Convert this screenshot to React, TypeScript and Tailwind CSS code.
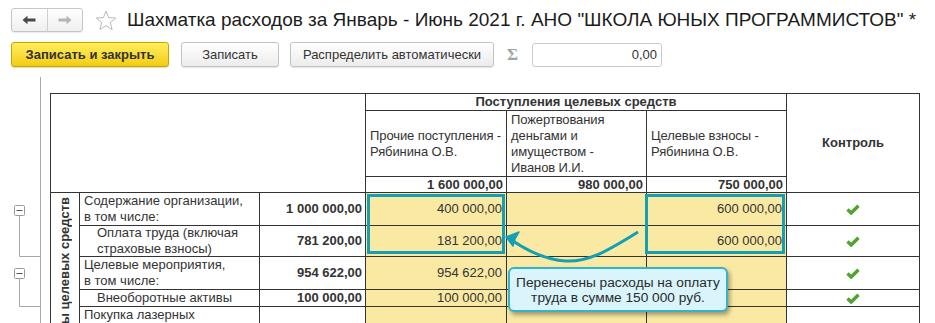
import React from "react";

const B = "border border-[#333]";

function Check() {
  return (
    <svg width="14" height="11" viewBox="0 0 14 11" className="mx-auto block">
      <path d="M1.5 5.5 L5.2 9 L12.5 1.8" stroke="#4ea42f" strokeWidth="3.4" fill="none" strokeLinecap="butt" strokeLinejoin="miter" />
    </svg>
  );
}

function Gutter() {
  return (
    <svg width="50" height="260" viewBox="0 0 50 260" className="block shrink-0">
      <line x1="40.5" y1="0" x2="40.5" y2="260" stroke="#a8a8a8" strokeWidth="1" />
      <rect x="14.5" y="128.5" width="10" height="10" fill="#fff" stroke="#9a9a9a" rx="1" />
      <line x1="16.5" y1="133.5" x2="22.5" y2="133.5" stroke="#555" />
      <polyline points="19.5,138.5 19.5,179.5 40.5,179.5" fill="none" stroke="#a8a8a8" />
      <rect x="14.5" y="191.5" width="10" height="10" fill="#fff" stroke="#9a9a9a" rx="1" />
      <line x1="16.5" y1="196.5" x2="22.5" y2="196.5" stroke="#555" />
      <polyline points="19.5,201.5 19.5,229.5 40.5,229.5" fill="none" stroke="#a8a8a8" />
    </svg>
  );
}

type Row = {
  h: string;
  name: React.ReactNode;
  indent?: boolean;
  amount: string;
  c1: string;
  c2: string;
  c3: string;
  check: boolean;
};

const rows: Row[] = [
  { h: "h-[32px]", name: <>Содержание организации,<br />в том числе:</>, amount: "1 000 000,00", c1: "400 000,00", c2: "", c3: "600 000,00", check: true },
  { h: "h-[30px]", name: <>Оплата труда (включая<br />страховые взносы)</>, indent: true, amount: "781 200,00", c1: "181 200,00", c2: "", c3: "600 000,00", check: true },
  { h: "h-[32px]", name: <>Целевые мероприятия,<br />в том числе:</>, amount: "954 622,00", c1: "954 622,00", c2: "", c3: "", check: true },
  { h: "h-[16px]", name: <>Внеоборотные активы</>, indent: true, amount: "100 000,00", c1: "100 000,00", c2: "", c3: "", check: true },
  { h: "h-[32px]", name: <>Покупка лазерных<br />принтеров</>, amount: "", c1: "", c2: "", c3: "", check: false },
  { h: "h-[32px]", name: <>Прочие расходы</>, amount: "", c1: "", c2: "", c3: "", check: false },
];

function Cell({ h, className, children }: { h: string; className?: string; children?: React.ReactNode }) {
  return <div className={`${h} flex flex-col justify-center overflow-visible ${className ?? ""}`}>{children}</div>;
}

export default function App() {
  return (
    <div className="relative w-[935px] h-[323px] overflow-hidden bg-white font-['Liberation_Sans',Arial,sans-serif] text-[#333]">
      {/* Title bar */}
      <div className="flex items-center h-[40px] pl-[11px]">
        <div className="flex shrink-0 h-[24px] w-[72px] rounded-[3px] border border-[#c6c6c6] bg-linear-to-b from-white to-[#efefef] shadow-[0_1px_1px_rgba(0,0,0,0.08)]">
          <div className="flex flex-1 items-center justify-center border-r border-[#d0d0d0]">
            <svg width="14" height="10" viewBox="0 0 14 10">
              <path d="M0.5 5 L5.5 0.8 L5.5 3.6 L13.5 3.6 L13.5 6.4 L5.5 6.4 L5.5 9.2 Z" fill="#4a4a4a" />
            </svg>
          </div>
          <div className="flex flex-1 items-center justify-center">
            <svg width="14" height="10" viewBox="0 0 14 10">
              <path d="M13.5 5 L8.5 0.8 L8.5 3.6 L0.5 3.6 L0.5 6.4 L8.5 6.4 L8.5 9.2 Z" fill="#b4b4b4" />
            </svg>
          </div>
        </div>
        <svg width="22" height="21" viewBox="0 0 22 21" className="ml-[12px] shrink-0">
          <path d="M11 1 L13.6 7.6 L20.8 8 L15.3 12.6 L17.1 19.6 L11 15.7 L4.9 19.6 L6.7 12.6 L1.2 8 L8.4 7.6 Z" fill="none" stroke="#b8b8b8" strokeWidth="1" strokeLinejoin="miter" />
        </svg>
        <div className="ml-[10px] text-[19px] leading-[24px] text-[#1b1b1b] whitespace-nowrap">
          Шахматка расходов за Январь - Июнь 2021 г. АНО "ШКОЛА ЮНЫХ ПРОГРАММИСТОВ" *
        </div>
      </div>

      {/* Command bar */}
      <div className="flex items-center h-[25px] mt-[2px] pl-[11px]">
        <button className="shrink-0 h-[25px] w-[158px] rounded-[3px] border border-[#c8a600] bg-linear-to-b from-[#ffee5a] to-[#f3cd00] text-[13px] font-bold text-[#333] shadow-[0_1px_1px_rgba(0,0,0,0.15)]">
          Записать и закрыть
        </button>
        <button className="shrink-0 ml-[12px] h-[25px] w-[98px] rounded-[3px] border border-[#c2c2c2] bg-linear-to-b from-white to-[#ececec] text-[13px] text-[#333] shadow-[0_1px_1px_rgba(0,0,0,0.1)]">
          Записать
        </button>
        <button className="shrink-0 ml-[11px] h-[25px] w-[204px] rounded-[3px] border border-[#c2c2c2] bg-linear-to-b from-white to-[#ececec] text-[13px] text-[#333] shadow-[0_1px_1px_rgba(0,0,0,0.1)]">
          Распределить автоматически
        </button>
        <span className="ml-[13px] w-[12px] text-[17px] leading-[20px] font-bold text-[#a3a3a3] font-['Liberation_Serif',serif]">Σ</span>
        <div className="ml-[13px] flex h-[24px] w-[130px] items-center justify-end rounded-[3px] border border-[#cbcbcb] pr-[4px] text-[13px] text-[#333]">
          0,00
        </div>
      </div>

      {/* Table area */}
      <div className="flex mt-[10px]">
        <Gutter />
        <div className="pt-[16px]">
          <table className="table-fixed border-collapse w-[869px] text-[13px] leading-[16px] text-[#333]">
            <colgroup>
              <col className="w-[29px]" />
              <col className="w-[180px]" />
              <col className="w-[106px]" />
              <col className="w-[141px]" />
              <col className="w-[140px]" />
              <col className="w-[140px]" />
              <col className="w-[133px]" />
            </colgroup>
            <thead>
              <tr>
                <th colSpan={3} rowSpan={3} className={`${B} p-0`}></th>
                <th colSpan={3} className={`${B} font-bold text-center p-0`}>
                  <Cell h="h-[16px]">Поступления целевых средств</Cell>
                </th>
                <th rowSpan={3} className={`${B} font-bold text-center p-0`}>Контроль</th>
              </tr>
              <tr>
                <td className={`${B} pl-[4px] pr-0 py-0 text-left tracking-[-0.1px]`}>
                  <Cell h="h-[65px]">
                    <div>Прочие поступления -<br />Рябинина О.В.</div>
                  </Cell>
                </td>
                <td className={`${B} pl-[4px] pr-0 py-0 text-left tracking-[-0.1px]`}>
                  <Cell h="h-[65px]">
                    <div>Пожертвования<br />деньгами и<br />имуществом -<br />Иванов И.И.</div>
                  </Cell>
                </td>
                <td className={`${B} pl-[4px] pr-0 py-0 text-left tracking-[-0.1px]`}>
                  <Cell h="h-[65px]">
                    <div>Целевые взносы -<br />Рябинина О.В.</div>
                  </Cell>
                </td>
              </tr>
              <tr>
                {["1 600 000,00", "980 000,00", "750 000,00"].map((v) => (
                  <td key={v} className={`${B} pr-[3px] py-0 text-right font-bold`}>
                    <Cell h="h-[15px]">{v}</Cell>
                  </td>
                ))}
              </tr>
            </thead>
            <tbody>
              {rows.map((r, i) => (
                <tr key={i}>
                  {i === 0 && (
                    <td rowSpan={rows.length} className={`${B} align-top p-0`}>
                      <div className="flex justify-center pt-[4px]">
                        <span className="[writing-mode:vertical-rl] rotate-180 whitespace-nowrap font-bold text-[13px] leading-[16px]">
                          Расходы целевых средств
                        </span>
                      </div>
                    </td>
                  )}
                  <td className={`${B} ${r.indent ? "pl-[17px]" : "pl-[4px]"} pr-0 py-0 whitespace-nowrap`}>
                    <Cell h={r.h}>
                      <div>{r.name}</div>
                    </Cell>
                  </td>
                  <td className={`${B} pr-[3px] py-0 text-right font-bold`}>
                    <Cell h={r.h}>{r.amount}</Cell>
                  </td>
                  <td className={`${B} bg-[#f9e9a3] pr-[4px] py-0 text-right`}>
                    <Cell h={r.h}>{r.c1}</Cell>
                  </td>
                  <td className={`${B} bg-[#f9e9a3] pr-[4px] py-0 text-right`}>
                    <Cell h={r.h}>{r.c2}</Cell>
                  </td>
                  <td className={`${B} bg-[#f9e9a3] pr-[4px] py-0 text-right`}>
                    <Cell h={r.h}>{r.c3}</Cell>
                  </td>
                  <td className={`${B} p-0`}>
                    <Cell h={r.h}>{r.check ? <Check /> : null}</Cell>
                  </td>
                </tr>
              ))}
            </tbody>
          </table>
        </div>
      </div>

      {/* Highlight boxes (annotation overlay) */}
      <div className="absolute left-[367px] top-[194px] w-[138px] h-[60px] border-[3px] border-[#13a0b6]" />
      <div className="absolute left-[645px] top-[194px] w-[140px] h-[60px] border-[3px] border-[#13a0b6]" />

      {/* Arrow */}
      <svg className="absolute left-[500px] top-[225px]" width="150" height="45" viewBox="500 225 150 45">
        <path d="M638 232 C606 252 588 262 566 261 C546 260 528 251 513 241" fill="none" stroke="#13a0b6" strokeWidth="3" />
        <path d="M506 237 L519 232 L515 239 L513 246 Z" fill="#13a0b6" stroke="#13a0b6" strokeWidth="1.5" strokeLinejoin="round" />
      </svg>

      {/* Callout */}
      <div className="absolute left-[508px] top-[267px] w-[220px] h-[45px] rounded-[6px] border-2 border-[#35b3c9] bg-[#d9f4fb] shadow-[2px_3px_4px_rgba(0,0,0,0.35)] flex items-center justify-center text-center text-[13.7px] leading-[15px] text-[#2b2b2b]">
        <div>Перенесены расходы на оплату<br />труда в сумме 150 000 руб.</div>
      </div>
    </div>
  );
}
